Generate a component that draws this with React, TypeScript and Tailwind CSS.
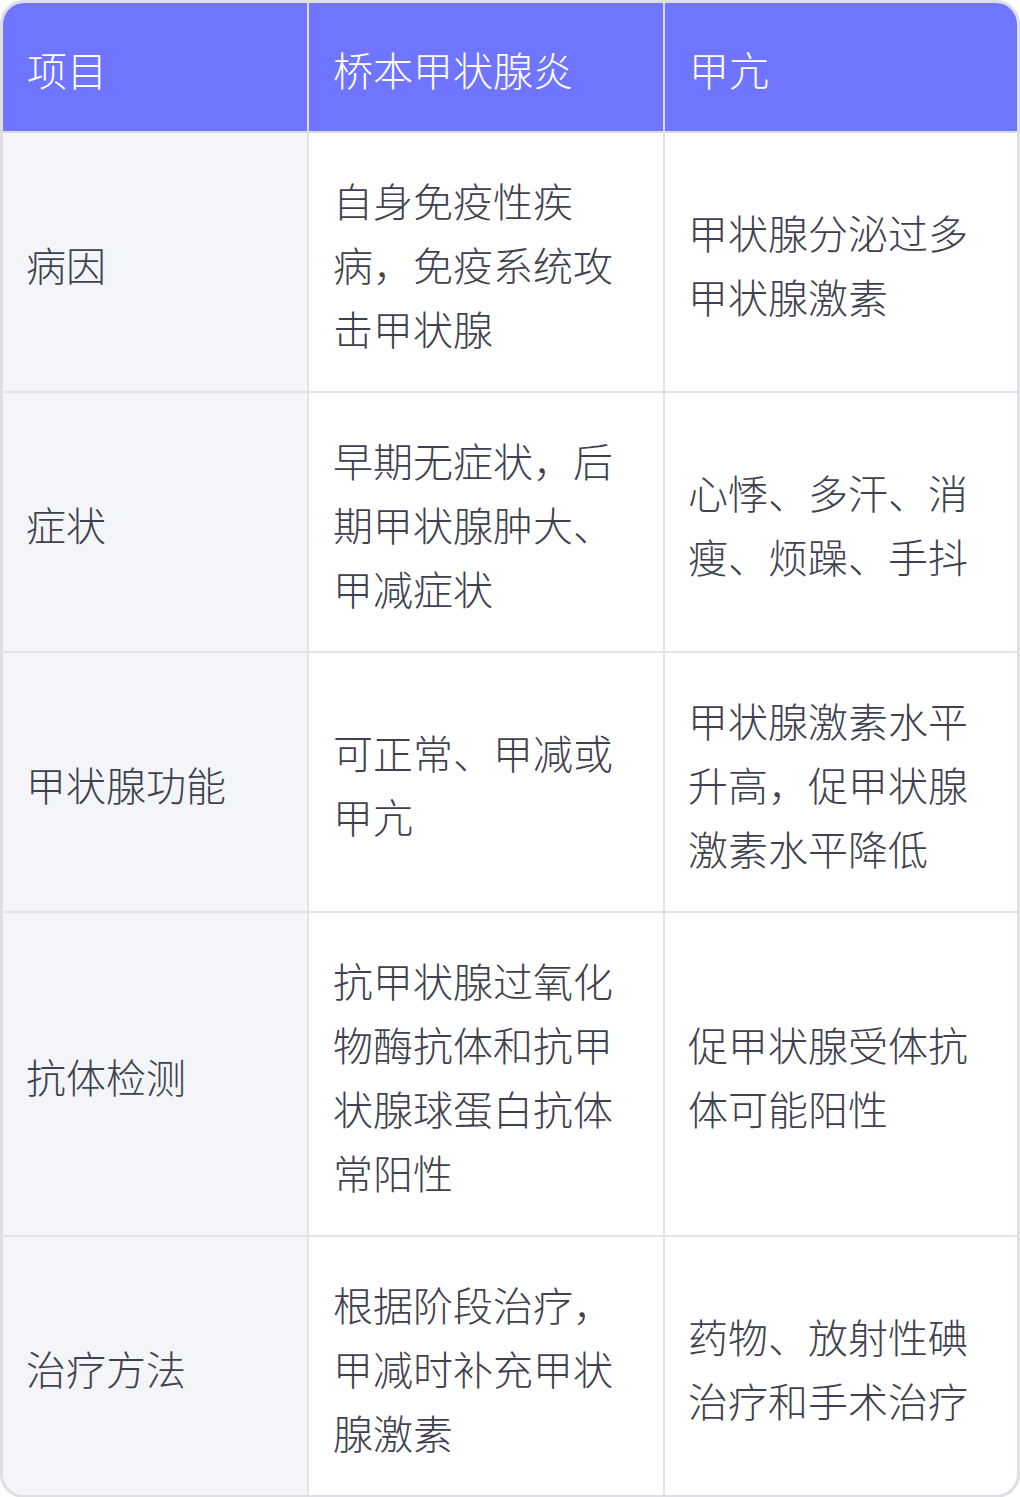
const rows: string[][] = [
  ["病因", "自身免疫性疾病，免疫系统攻击甲状腺", "甲状腺分泌过多甲状腺激素"],
  ["症状", "早期无症状，后期甲状腺肿大、甲减症状", "心悸、多汗、消瘦、烦躁、手抖"],
  ["甲状腺功能", "可正常、甲减或甲亢", "甲状腺激素水平升高，促甲状腺激素水平降低"],
  ["抗体检测", "抗甲状腺过氧化物酶抗体和抗甲状腺球蛋白抗体常阳性", "促甲状腺受体抗体可能阳性"],
  ["治疗方法", "根据阶段治疗，甲减时补充甲状腺激素", "药物、放射性碘治疗和手术治疗"],
];

const head = ["项目", "桥本甲状腺炎", "甲亢"];

export default function App() {
  return (
    <div
      className="w-[1020px] bg-white font-light"
      style={{ fontFamily: '"Noto Sans CJK SC", "Noto Sans", sans-serif' }}
    >
      <div className="overflow-hidden rounded-[24px] border-[3px] border-[#dedfe4]">
        <div className="grid grid-cols-[306px_356px_352px] bg-[#7075ff] text-[40px] leading-[64px] text-white">
          {head.map((h, i) => (
            <div
              key={h}
              className={`border-b-2 border-[#d9dae3] pt-[34px] pb-[30px] ${i === 0 ? "px-[24px]" : "px-[24px]"} ${i < 2 ? "border-r-2" : ""}`}
            >
              {h}
            </div>
          ))}
        </div>
        {rows.map((r, ri) => (
          <div
            key={r[0]}
            className={`grid grid-cols-[306px_356px_352px] text-[40px] leading-[64px] text-[#3f414e] ${ri < rows.length - 1 ? "border-b-2 border-[#e3e4e8]" : ""}`}
          >
            <div className="flex items-center border-r-2 border-[#e3e4e8] bg-[#f4f5f9] px-[23px] pt-[35px] pb-[31px]">
              {r[0]}
            </div>
            <div className="flex items-center border-r-2 border-[#e3e4e8] px-[24px] pt-[35px] pb-[31px]">
              {r[1]}
            </div>
            <div className="flex items-center px-[23px] pt-[35px] pb-[31px]">{r[2]}</div>
          </div>
        ))}
      </div>
    </div>
  );
}
